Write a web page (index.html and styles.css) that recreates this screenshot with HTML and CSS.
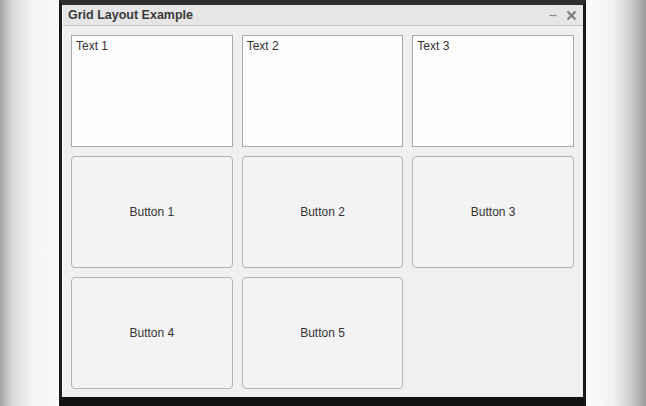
FILE: index.html
```html
<!DOCTYPE html>
<html>
<head>
<meta charset="utf-8">
<link rel="stylesheet" href="styles.css">
</head>
<body>
<div class="frame">
  <div class="window">
    <div class="titlebar">
      <span class="title">Grid Layout Example</span>
      <span class="controls">
        <svg class="ctl" width="10" height="10" viewBox="0 0 10 10"><line x1="1.5" y1="5.5" x2="8.5" y2="5.5" stroke="#8a8a8a" stroke-width="1.3"/></svg>
        <svg class="ctl" width="11" height="11" viewBox="0 0 11 11"><path d="M1.5 1.5 L9.5 9.5 M9.5 1.5 L1.5 9.5" stroke="#7a7a7a" stroke-width="2"/></svg>
      </span>
    </div>
    <div class="grid">
      <div class="textbox">Text 1</div>
      <div class="textbox">Text 2</div>
      <div class="textbox">Text 3</div>
      <button class="btn">Button 1</button>
      <button class="btn">Button 2</button>
      <button class="btn">Button 3</button>
      <button class="btn">Button 4</button>
      <button class="btn">Button 5</button>
    </div>
  </div>
</div>
</body>
</html>
```
FILE: styles.css
```css
html, body {
  margin: 0;
  padding: 0;
}
body {
  width: 646px;
  height: 406px;
  overflow: hidden;
  font-family: "Liberation Sans", Arial, sans-serif;
  background: linear-gradient(to right, #a4a4a4 0px, #d8d8d8 12px, #f4f4f4 32px, #fafafa 59px, #fafafa 590px, #f2f2f2 612px, #d0d0d0 630px, #9a9a9a 646px);
  padding-left: 59px;
  box-sizing: border-box;
}
.frame {
  width: 527px;
  height: 406px;
  box-sizing: border-box;
  border-top: 5px solid #2e2e2e;
  border-left: 3px solid #1a1a1a;
  border-right: 3px solid #1a1a1a;
  border-bottom: 9px solid #111;
  background: #f0f0f0;
  display: flex;
  flex-direction: column;
}
.window {
  flex: 1;
  display: flex;
  flex-direction: column;
  border-left: 1px solid #fafafa;
}
.titlebar {
  height: 21px;
  box-sizing: border-box;
  background: #e6e6e6;
  border-bottom: 1px solid #c4c4c4;
  display: flex;
  align-items: center;
  justify-content: space-between;
  padding: 0 6px 0 5px;
}
.title {
  font-size: 12.5px;
  font-weight: bold;
  color: #3a3a3a;
}
.controls {
  display: flex;
  align-items: center;
  gap: 8px;
}
.ctl {
  display: block;
}
.grid {
  flex: 1;
  padding: 9px 9px 8px 8px;
  display: grid;
  grid-template-columns: repeat(3, 1fr);
  grid-template-rows: 112px 112px 112px;
  gap: 9px;
}
.textbox {
  background: #fefefe;
  border: 1px solid #a8a8a8;
  font-size: 12px;
  color: #333;
  padding: 3px 4px;
}
.btn {
  background: #f3f3f3;
  border: 1px solid #b4b4b4;
  border-radius: 4px;
  font-family: "Liberation Sans", Arial, sans-serif;
  font-size: 12px;
  color: #333;
  padding: 0;
  margin: 0;
}
```
